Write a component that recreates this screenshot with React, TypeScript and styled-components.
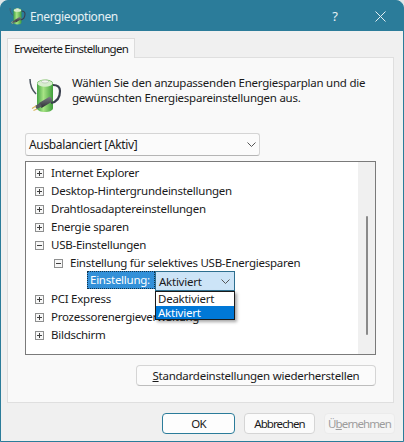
import React from "react";
import styled, { createGlobalStyle } from "styled-components";

const GlobalStyle = createGlobalStyle`
  html, body {
    margin: 0;
    padding: 0;
    background: #dfe6e8;
  }
  body {
    font-family: "Noto Sans", "Open Sans", sans-serif;
    font-size: 11.5px;
    letter-spacing: -0.25px;
    white-space: nowrap;
    color: #1a1a1a;
  }
`;

const treeTop = ["Internet Explorer", "Desktop-Hintergrundeinstellungen", "Drahtlosadaptereinstellungen", "Energie sparen"];
const treeBottom = ["PCI Express", "Prozessorenergieverwaltung", "Bildschirm"];

function BatteryIcon({ size }: { size: number }) {
  return (
    <svg width={size} height={size} viewBox="0 0 36 36" fill="none">
      <defs>
        <linearGradient id="cell" x1="0" y1="0" x2="1" y2="0">
          <stop offset="0" stopColor="#45a543" />
          <stop offset="0.4" stopColor="#a8e486" />
          <stop offset="1" stopColor="#3f9e3b" />
        </linearGradient>
        <linearGradient id="plug" x1="0" y1="0" x2="0" y2="1">
          <stop offset="0" stopColor="#7b7e84" />
          <stop offset="1" stopColor="#2a2c30" />
        </linearGradient>
      </defs>
      <path d="M2 2c0 7 2 11 6 15" stroke="#4c5560" strokeWidth="1.5" />
      <path d="M9 7c0-3 3.500-4.500 8-4.500s8 1.500 8 4.500v24c0 2.500-3.500 4-8 4s-8-1.500-8-4z" fill="url(#cell)" />
      <ellipse cx="17" cy="6.500" rx="7.500" ry="3.200" fill="#d8edce" />
      <ellipse cx="17" cy="4.500" rx="3.500" ry="1.500" fill="#f2f6ef" stroke="#a6b9a2" strokeWidth="0.6" />
      <path d="M25 8c5 0 7 2 7 6 0 7-4 11-9 12" stroke="#3a3f4e" strokeWidth="2.200" />
      <path d="M21 20l-10 6 2.500 5 10-6c2-2-.5-6-2.500-5z" fill="url(#plug)" />
      <path d="M12 26l-5 3 1.500 3 5.500-2.500z" fill="#54585e" />
      <path d="M8 29l-4 2.500M9 32l-3.500 1.500" stroke="#d9b65c" strokeWidth="1.200" />
    </svg>
  );
}

function Chevron() {
  return (
    <svg width="9" height="5" viewBox="0 0 9 5" fill="none">
      <path d="M.5.5 4.500 4.500 8.500.5" stroke="#555" strokeWidth="1" />
    </svg>
  );
}

function Expander({ open }: { open?: boolean }) {
  return (
    <ExpanderBox>
      <svg width="9" height="9" viewBox="0 0 9 9" fill="none">
        <rect x=".5" y=".5" width="8" height="8" stroke="#8e8f8f" fill="#f7f7f7" />
        <path d={open ? "M2 4.500h5" : "M2 4.500h5M4.500 2v5"} stroke="#3f3f3f" />
      </svg>
    </ExpanderBox>
  );
}

export default function App() {
  return (
    <>
      <GlobalStyle />
      <Window>
        <TitleBar>
          <TitleIcon>
            <BatteryIcon size={18} />
          </TitleIcon>
          <TitleText>Energieoptionen</TitleText>
          <HelpGlyph>?</HelpGlyph>
          <CloseGlyph>
            <svg width="11" height="11" viewBox="0 0 11 11" fill="none">
              <path d="M.5.5l10 10M10.500.5l-10 10" stroke="#e4eff3" strokeWidth="1" />
            </svg>
          </CloseGlyph>
        </TitleBar>
        <Client>
          <TabStrip>
            <Tab>Erweiterte Einstellungen</Tab>
          </TabStrip>
          <Panel>
            <Intro>
              <IntroIcon>
                <BatteryIcon size={36} />
              </IntroIcon>
              <IntroText>
                Wählen Sie den anzupassenden Energiesparplan und die
                <br />
                gewünschten Energiespareinstellungen aus.
              </IntroText>
            </Intro>
            <PlanSelect>
              <span>Ausbalanciert [Aktiv]</span>
              <Chevron />
            </PlanSelect>
            <TreeBox>
              <TreeList>
                {treeTop.map((label) => (
                  <TreeRow key={label}>
                    <Expander />
                    {label}
                  </TreeRow>
                ))}
                <TreeRow>
                  <Expander open />
                  USB-Einstellungen
                </TreeRow>
                <TreeRow $indent={19}>
                  <Expander open />
                  Einstellung für selektives USB-Energiesparen
                </TreeRow>
                <SettingRow>
                  <SettingLabel>Einstellung:</SettingLabel>
                  <SettingControl>
                    <SettingSelect>
                      <span>Aktiviert</span>
                      <Chevron />
                    </SettingSelect>
                    <Dropdown>
                      <DropdownItem>Deaktiviert</DropdownItem>
                      <DropdownItem $selected>Aktiviert</DropdownItem>
                    </Dropdown>
                  </SettingControl>
                </SettingRow>
                {treeBottom.map((label) => (
                  <TreeRow key={label}>
                    <Expander />
                    {label}
                  </TreeRow>
                ))}
              </TreeList>
              <ScrollTrack>
                <ScrollThumb />
              </ScrollTrack>
            </TreeBox>
            <RestoreRow>
              <RestoreButton>
                <u>S</u>tandardeinstellungen wiederherstellen
              </RestoreButton>
            </RestoreRow>
          </Panel>
          <Footer>
            <DialogButton $primary>OK</DialogButton>
            <DialogButton>Abbrechen</DialogButton>
            <DialogButton $disabled>
              Ü<u>b</u>ernehmen
            </DialogButton>
          </Footer>
        </Client>
      </Window>
    </>
  );
}

const Window = styled.div`
  width: 404px;
  height: 442px;
  box-sizing: border-box;
  display: flex;
  flex-direction: column;
  background: #2b7c9a;
  border-radius: 8px 8px 0 0;
  border: 1px solid #2b7c9a;
  overflow: hidden;
`;

const TitleBar = styled.div`
  height: 30px;
  flex: none;
  display: flex;
  align-items: center;
  color: #e6f1f5;
`;

const TitleIcon = styled.div`
  width: 18px;
  height: 18px;
  margin-left: 8px;
  margin-right: 3px;
`;

const TitleText = styled.div`
  flex: 1;
  font-size: 12px;
  letter-spacing: -0.4px;
`;

const HelpGlyph = styled.div`
  width: 30px;
  text-align: center;
  font-size: 13px;
  margin-right: 13px;
  margin-left: 2px;
`;

const CloseGlyph = styled.div`
  width: 34px;
  margin-right: 6px;
  display: flex;
  justify-content: center;
`;

const Client = styled.div`
  flex: 1;
  min-height: 0;
  display: flex;
  flex-direction: column;
  background: #f0f0f0;
  padding: 7px 7px 0 6px;
`;

const TabStrip = styled.div`
  display: flex;
  height: 20px;
  flex: none;
  margin-bottom: -1px;
`;

const Tab = styled.div`
  width: 128px;
  box-sizing: border-box;
  background: #f9f9f9;
  border: 1px solid #dcdcdc;
  border-bottom: none;
  text-align: center;
  line-height: 19px;
  letter-spacing: -0.75px;
  position: relative;
  z-index: 1;
`;

const Panel = styled.div`
  width: 387px;
  height: 346px;
  box-sizing: border-box;
  flex: none;
  background: #f9f9f9;
  border: 1px solid #dfdfdf;
  padding: 0 17px;
  display: flex;
  flex-direction: column;
`;

const Intro = styled.div`
  display: flex;
  height: 75px;
  flex: none;
`;

const IntroIcon = styled.div`
  width: 36px;
  height: 36px;
  margin: 19px 8px 0 3px;
`;

const IntroText = styled.div`
  margin-top: 17px;
  line-height: 15px;
`;

const PlanSelect = styled.div`
  width: 235px;
  height: 23px;
  box-sizing: border-box;
  flex: none;
  display: flex;
  align-items: center;
  justify-content: space-between;
  background: #fbfbfb;
  border: 1px solid #d5d5d5;
  border-bottom-color: #b5b5b5;
  border-radius: 3px;
  padding: 0 3px 0 3px;
  font-size: 12px;
  letter-spacing: -0.35px;
`;

const TreeBox = styled.div`
  width: 351px;
  height: 194px;
  box-sizing: border-box;
  flex: none;
  margin-top: 5px;
  display: flex;
  background: #fff;
  border: 1px solid #7a7a7a;
`;

const TreeList = styled.div`
  flex: 1;
  padding-top: 1px;
`;

const TreeRow = styled.div<{ $indent?: number }>`
  height: 18px;
  display: flex;
  align-items: center;
  padding-left: ${(p) => 9 + (p.$indent ?? 0)}px;
`;

const ExpanderBox = styled.span`
  display: inline-flex;
  width: 16px;
  height: 9px;
  margin-top: 2px;
`;

const SettingRow = styled.div`
  height: 18px;
  display: flex;
  padding-left: 61px;
`;

const SettingLabel = styled.div`
  width: 68px;
  height: 18px;
  box-sizing: border-box;
  background: #3390d8;
  color: #fff;
  outline: 1px dotted #12324a;
  outline-offset: -1px;
  padding-left: 3px;
  line-height: 17px;
`;

const SettingControl = styled.div`
  position: relative;
  width: 80px;
`;

const SettingSelect = styled.div`
  height: 20px;
  box-sizing: border-box;
  display: flex;
  align-items: center;
  justify-content: space-between;
  background: #cce4f7;
  border: 1px solid #2d6f8f;
  padding: 0 4px 0 3px;
`;

const Dropdown = styled.div`
  position: absolute;
  top: 20px;
  left: 0;
  width: 80px;
  box-sizing: border-box;
  background: #fff;
  border: 1px solid #1a1a1a;
  box-shadow: 2px 2px 3px rgba(0, 0, 0, 0.35);
  z-index: 2;
`;

const DropdownItem = styled.div<{ $selected?: boolean }>`
  height: 13.5px;
  line-height: 13px;
  padding-left: 2px;
  background: ${(p) => (p.$selected ? "#0078d7" : "#fff")};
  color: ${(p) => (p.$selected ? "#fff" : "#1a1a1a")};
`;

const ScrollTrack = styled.div`
  width: 17px;
  flex: none;
  background: #f0f0f0;
  display: flex;
  justify-content: center;
  padding-top: 54px;
  box-sizing: border-box;
`;

const ScrollThumb = styled.div`
  width: 2px;
  height: 119px;
  margin-left: 1px;
  background: #8a8a8a;
  border-radius: 1px;
`;

const RestoreRow = styled.div`
  width: 351px;
  display: flex;
  justify-content: flex-end;
  margin-top: 10px;
`;

const RestoreButton = styled.div`
  width: 240px;
  height: 21px;
  box-sizing: border-box;
  background: #fbfbfb;
  border: 1px solid #d5d5d5;
  border-bottom-color: #bdbdbd;
  border-radius: 4px;
  text-align: center;
  line-height: 19px;
`;

const Footer = styled.div`
  display: flex;
  justify-content: flex-end;
  gap: 9px;
  padding-top: 10px;
  margin-right: 1px;
`;

const DialogButton = styled.div<{ $primary?: boolean; $disabled?: boolean }>`
  width: ${(p) => (p.$primary ? 73 : 71)}px;
  height: 21px;
  box-sizing: border-box;
  text-align: center;
  line-height: 19px;
  border-radius: 4px;
  letter-spacing: -0.9px;
  background: ${(p) => (p.$primary ? "#fdfdfd" : p.$disabled ? "#f5f5f5" : "#fbfbfb")};
  color: ${(p) => (p.$disabled ? "#9d9d9d" : "#1a1a1a")};
  border: 1px solid ${(p) => (p.$primary ? "#2b7c9a" : p.$disabled ? "#ebebeb" : "#d5d5d5")};
`;
